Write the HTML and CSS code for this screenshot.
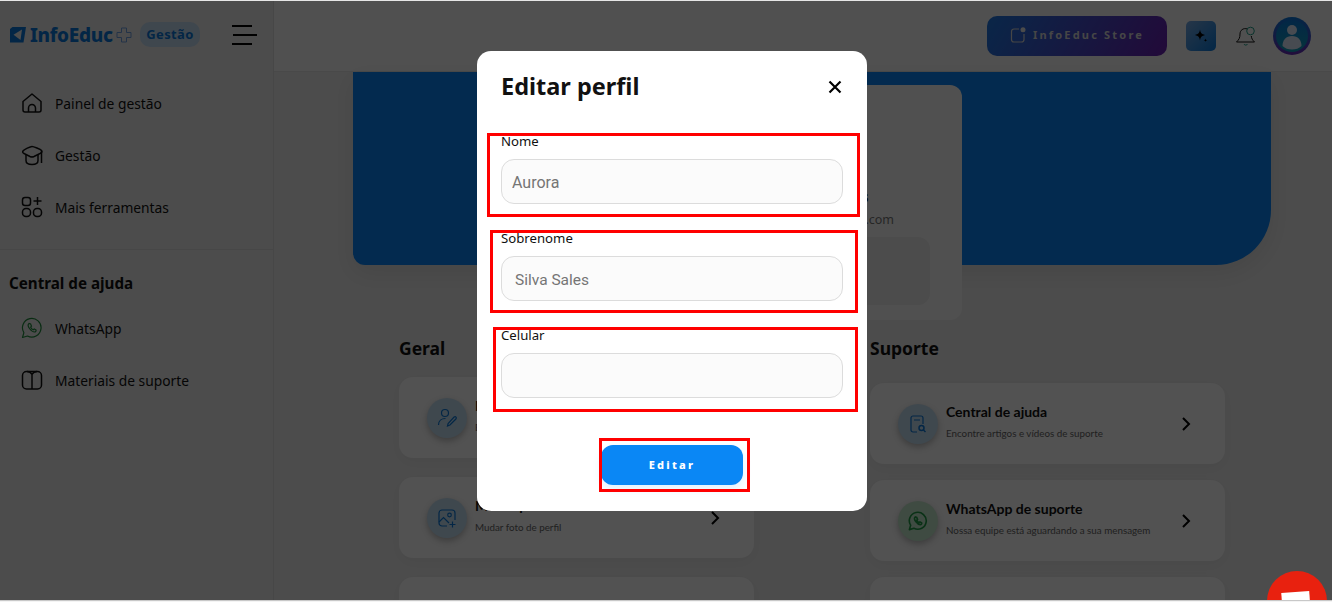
FILE: index.html
```html
<!DOCTYPE html>
<html>

<head>
  <meta charset="UTF-8">
  <title>InfoEduc Gestão</title>
  <link rel="stylesheet" href="styles.css">
</head>

<body>
  <div class="app">
    <aside class="sidebar">
      <div class="brand">
        <svg class="brand-mark" viewBox="0 0 16 16" width="16" height="16">
          <path d="M0 0h16l-2.500 15.500H0z" fill="#0a78d8" />
          <path d="M3.500 7.800l8.500-5.300-1.500 10.500z" fill="#ebebeb" />
          <path d="M0 0h2.500l-2.500 2z" fill="#ebebeb" />
        </svg>
        <span class="brand-name">InfoEduc</span>
        <svg class="brand-plus" viewBox="0 0 16 16" width="16" height="16" fill="none" stroke="#6f9fe0" stroke-width="1">
          <path d="M5.500 1h5v4.500h4.500v5h-4.500v4.500h-5v-4.500h-4.500v-5h4.500z" />
        </svg>
        <span class="brand-badge">Gestão</span>
        <div class="burger"><i></i><i class="long"></i><i></i></div>
      </div>

      <nav class="menu">
        <a class="menu-item">
          <svg viewBox="0 0 22 22" width="22" height="22" fill="none" stroke="#111" stroke-width="1.500">
            <path d="M2 9.500L11 2l9 7.500V18a2 2 0 0 1-2 2H4a2 2 0 0 1-2-2z" stroke-linejoin="round" />
            <path d="M7.500 20v-4a3.500 3.500 0 0 1 7 0v4" />
          </svg>
          Painel de gestão
        </a>
        <a class="menu-item">
          <svg viewBox="0 0 22 22" width="22" height="22" fill="none" stroke="#111" stroke-width="1.500">
            <path d="M11 2.500c-1.500 0-8 3-9 4.500-.8 1.200 0 2 1 2.500l6 3c1.500.7 2.500.7 4 0l6-3c1.500-.8 2.500-1.500 1.500-3-1-1.300-8-4-9.500-4z" stroke-linejoin="round" />
            <path d="M5 11v5.500c0 3 3 4 6 4s6-1 6-4V11M20.500 7v12" />
          </svg>
          Gestão
        </a>
        <a class="menu-item">
          <svg viewBox="0 0 22 22" width="22" height="22" fill="none" stroke="#111" stroke-width="1.500">
            <rect x="1.500" y="1.500" width="8" height="8" rx="2.500" />
            <rect x="1.500" y="12.500" width="8" height="8" rx="3.500" />
            <rect x="12.500" y="12.500" width="8" height="8" rx="3.500" />
            <path d="M16.500 1v8M12.500 5h8" />
          </svg>
          Mais ferramentas
        </a>
      </nav>

      <div class="help">
        <h3>Central de ajuda</h3>
        <a class="menu-item">
          <svg viewBox="0 0 22 22" width="22" height="22" fill="none" stroke="#1f8a3c" stroke-width="1.200">
            <path d="M1.500 20.500l1.400-4.800A9.300 9.300 0 1 1 6.500 19z" stroke-linejoin="round" />
            <path d="M8 6.500c-1.500 1-1 3 .5 5s3.500 3.500 5 3.500c1 0 2-1 1.500-2l-1.800-1-1 .8c-1-.5-2-1.600-2.500-2.600l.8-1-.9-2.200z" />
          </svg>
          WhatsApp
        </a>
        <a class="menu-item">
          <svg viewBox="0 0 22 22" width="22" height="22" fill="none" stroke="#111" stroke-width="1.500">
            <rect x="1.500" y="2.500" width="19" height="17.500" rx="4" />
            <path d="M11 5.500c-1-2-3-3-5-3M11 5.500c1-2 3-3 5-3M11 5.500V20" />
          </svg>
          Materiais de suporte
        </a>
      </div>
    </aside>

    <div class="content">
      <header class="topbar">
        <button class="store-btn">
          <svg viewBox="0 0 16 16" width="16" height="16" fill="none" stroke="#d8d8d8" stroke-width="1.200">
            <path d="M9 2H4a2.500 2.500 0 0 0-2.500 2.500v8A2.500 2.500 0 0 0 4 15h7.500a2.500 2.500 0 0 0 2.500-2.500V7" />
            <circle cx="13" cy="2.800" r="2.500" fill="#e8e8e8" stroke="none" />
          </svg>
          InfoEduc Store
        </button>
        <div class="spark">
          <svg viewBox="0 0 16 16" width="16" height="16" fill="#000">
            <path d="M7 1.500c.6 3.500 1.500 4.500 5 5.500-3.500 1-4.400 2-5 5.500-.6-3.500-1.500-4.500-5-5.500 3.500-1 4.400-2 5-5.500z" />
            <path d="M12.500 10.500c.2 1.200.6 1.600 1.800 1.800-1.200.2-1.600.6-1.800 1.800-.2-1.200-.6-1.600-1.800-1.800 1.200-.2 1.600-.6 1.800-1.800z" />
          </svg>
        </div>
        <svg class="bell" viewBox="0 0 22 22" width="22" height="22" fill="none" stroke="#111" stroke-width="1">
          <path d="M12.500 4C8 2.500 5 5.500 5 9c0 4-1 5.500-3.500 8h18c-2-2-3-3.500-3.200-6" />
          <path d="M9 19c.5 1.500 3 1.500 3.500 0" stroke="#1fa08a" />
          <circle cx="15.500" cy="6" r="3.800" stroke="#1fa08a" />
        </svg>
        <div class="avatar">
          <div class="avatar-inner">
            <svg viewBox="0 0 32 32" width="32" height="32" fill="#dbe9fb">
              <circle cx="16" cy="10" r="5" />
              <path d="M6.500 26c0-6 3.500-10 9.500-10s9.500 4 9.500 10c-2.500 2.500-5.500 3.500-9.500 3.500s-7-1-9.500-3.500z" />
            </svg>
          </div>
        </div>
      </header>

      <main class="page">
        <section class="hero">
          <div class="profile-card">
            <strong>Aurora Silva Sales</strong>
            <span>aurorasilvasales1@gmail.com</span>
            <div class="profile-box"></div>
          </div>
        </section>

        <section class="columns">
          <div class="column column-left">
            <h2>Geral</h2>
            <div class="card-list">
              <a class="card">
                <span class="card-icon">
                  <svg viewBox="0 0 20 20" width="20" height="20" fill="none" stroke="#0a78d8" stroke-width="1.200">
                    <circle cx="8" cy="5" r="3.500" />
                    <path d="M1.500 17c0-4 3-6.500 7-6.500M10.500 18l.6-2.500 6-6.500c1.600-1 2.800.5 1.800 2l-6 6z" />
                  </svg>
                </span>
                <span class="card-text"><b>Editar perfil</b><small>Editar informações do perfil</small></span>
                <svg class="chevron" viewBox="0 0 12 16" width="12" height="16" fill="none" stroke="#000" stroke-width="2"><path d="M3 2l6 6-6 6" /></svg>
              </a>
              <a class="card">
                <span class="card-icon">
                  <svg viewBox="0 0 20 20" width="20" height="20" fill="none" stroke="#0a78d8" stroke-width="1.200">
                    <path d="M10 18H5a3 3 0 0 1-3-3V5a3 3 0 0 1 3-3h10a3 3 0 0 1 3 3v7" />
                    <circle cx="12.500" cy="7" r="1.800" />
                    <path d="M2 14l4.500-4.500L12 15M15.500 13.500v6M12.500 16.500h6" />
                  </svg>
                </span>
                <span class="card-text"><b>Mudar perfil</b><small>Mudar foto de perfil</small></span>
                <svg class="chevron" viewBox="0 0 12 16" width="12" height="16" fill="none" stroke="#000" stroke-width="2"><path d="M3 2l6 6-6 6" /></svg>
              </a>
              <a class="card"></a>
            </div>
          </div>

          <div class="column column-right">
            <h2>Suporte</h2>
            <div class="card-list">
              <a class="card">
                <span class="card-icon">
                  <svg viewBox="0 0 20 20" width="20" height="20" fill="none" stroke="#0a78d8" stroke-width="1.200">
                    <path d="M9 18H5a2 2 0 0 1-2-2V4a2 2 0 0 1 2-2h8a2 2 0 0 1 2 2v6M6 6h6" />
                    <circle cx="13.500" cy="14" r="2.500" stroke-width="1.500" />
                    <path d="M15.500 16l2 2" stroke-width="1.500" />
                  </svg>
                </span>
                <span class="card-text"><b>Central de ajuda</b><small>Encontre artigos e vídeos de suporte</small></span>
                <svg class="chevron" viewBox="0 0 12 16" width="12" height="16" fill="none" stroke="#000" stroke-width="2"><path d="M3 2l6 6-6 6" /></svg>
              </a>
              <a class="card">
                <span class="card-icon card-icon-green">
                  <svg viewBox="0 0 22 22" width="20" height="20" fill="none" stroke="#1f9a45" stroke-width="1.800">
                    <path d="M1.500 20.500l1.400-4.800A9.300 9.300 0 1 1 6.500 19z" stroke-linejoin="round" />
                    <path d="M8 6.500c-1.500 1-1 3 .5 5s3.500 3.500 5 3.500c1 0 2-1 1.500-2l-1.800-1-1 .8c-1-.5-2-1.600-2.500-2.600l.8-1-.9-2.200z" />
                  </svg>
                </span>
                <span class="card-text"><b>WhatsApp de suporte</b><small>Nossa equipe está aguardando a sua mensagem</small></span>
                <svg class="chevron" viewBox="0 0 12 16" width="12" height="16" fill="none" stroke="#000" stroke-width="2"><path d="M3 2l6 6-6 6" /></svg>
              </a>
              <a class="card"></a>
            </div>
          </div>
        </section>
      </main>
    </div>
  </div>

  <div class="overlay">
    <div class="modal">
      <div class="modal-head">
        <h1>Editar perfil</h1>
        <svg viewBox="0 0 14 14" width="14" height="14" fill="none" stroke="#000" stroke-width="2.200"><path d="M1.500 1.500l11 11M12.500 1.500l-11 11" /></svg>
      </div>
      <div class="field">
        <label>Nome</label>
        <input class="input input-nome" type="text" value="Aurora">
      </div>
      <div class="field">
        <label>Sobrenome</label>
        <input class="input input-wide" type="text" value="Silva Sales">
      </div>
      <div class="field">
        <label>Celular</label>
        <input class="input" type="text">
      </div>
      <div class="modal-foot">
        <button class="save-btn">Editar</button>
      </div>

      <!-- marcacoes vermelhas por cima do modal -->
      <div class="mark mark-nome"></div>
      <div class="mark mark-sobrenome"></div>
      <div class="mark mark-celular"></div>
      <div class="mark mark-botao"></div>
    </div>
  </div>

  <div class="chat-bubble"><span></span></div>
  <div class="edge-top"></div>
  <div class="edge-bottom"></div>
</body>

</html>
```

FILE: styles.css
```css
* {
  box-sizing: border-box;
}

html,
body {
  margin: 0;
  height: 100%;
  overflow: hidden;
}

body {
  font-family: "Noto Sans", "Open Sans", sans-serif;
  color: #111;
  background-color: #ececec;
}

.app {
  display: flex;
  height: 602px;
  overflow: hidden;
}

/* Barra lateral */
.sidebar {
  width: 274px;
  flex-shrink: 0;
  border-right: 1px solid #dedede;
}

.brand {
  display: flex;
  align-items: center;
  height: 71px;
  padding: 0 0 2px 10px;
}

.brand-name {
  margin-left: 4px;
  padding-top: 1px;
  width: 82px;
  font-size: 19px;
  font-weight: 800;
  letter-spacing: -0.3px;
  white-space: nowrap;
  color: #0a78d8;
}

.brand-plus {
  margin-left: 4px;
}

.brand-badge {
  margin-left: 8px;
  width: 60px;
  height: 25px;
  line-height: 25px;
  text-align: center;
  border-radius: 10px;
  font-size: 13px;
  font-weight: 700;
  letter-spacing: 0.4px;
  color: #0a78d8;
  background-color: #c4dcf2;
}

.burger {
  margin-left: 32px;
  display: flex;
  flex-direction: column;
  gap: 7px;
  width: 25px;
}

.burger i {
  display: block;
  width: 20px;
  height: 2px;
  background-color: #000;
}

.burger .long {
  width: 24px;
  margin-left: 1px;
}

.menu {
  padding-top: 6px;
  height: 179px;
  border-bottom: 1px solid #dedede;
}

.menu-item {
  display: flex;
  align-items: center;
  gap: 12px;
  height: 52px;
  padding-left: 21px;
  font-size: 13.800px;
}

.help h3 {
  margin: 22px 0 8px;
  padding-left: 9px;
  font-size: 15.200px;
  line-height: 22px;
  font-weight: 700;
}

/* Cabecalho */
.content {
  flex: 1;
  min-width: 0;
}

.topbar {
  display: flex;
  align-items: center;
  height: 72px;
  padding: 0 0 0 713px;
  background-color: #f8f8f8;
  border-bottom: 1px solid #e4e4e4;
}

.store-btn {
  display: flex;
  align-items: center;
  justify-content: center;
  gap: 7px;
  width: 180px;
  height: 40px;
  padding: 0 0 2px;
  border: 0;
  border-radius: 10px;
  font-family: "Noto Sans", sans-serif;
  font-size: 11px;
  font-weight: 700;
  letter-spacing: 2.200px;
  color: #d8d8d8;
  background: linear-gradient(120deg, #1f78e0, #6a1fb0);
}

.spark {
  display: flex;
  align-items: center;
  justify-content: center;
  margin-left: 19px;
  width: 30px;
  height: 30px;
  border-radius: 5px;
  background: linear-gradient(135deg, #77a8e0, #0a78d8);
}

.bell {
  margin-left: 19px;
}

.avatar {
  display: flex;
  align-items: center;
  justify-content: center;
  margin-left: 16px;
  width: 38px;
  height: 38px;
  border-radius: 50%;
  background: linear-gradient(180deg, #0a78d8, #6a2bb8);
}

.avatar-inner {
  width: 32px;
  height: 32px;
  border-radius: 50%;
  overflow: hidden;
  background: linear-gradient(180deg, #0a78d8, #12a0b8);
}

/* Conteudo */
.page {
  padding-left: 79px;
}

.hero {
  display: flex;
  justify-content: flex-end;
  width: 918px;
  height: 193px;
  padding: 13px 309px 0 0;
  background-color: #0a84f5;
  border-radius: 0 0 55px 12px;
  box-shadow: 0 8px 24px rgba(0, 0, 0, 0.08);
}

.profile-card {
  display: flex;
  flex-direction: column;
  align-items: center;
  width: 310px;
  height: 235px;
  padding: 103px 32px 0;
  border-radius: 12px;
  background-color: #f9f9f9;
}

.profile-card strong {
  font-size: 14px;
  line-height: 18px;
  white-space: nowrap;
}

.profile-card span {
  margin-top: 5px;
  font-size: 12.500px;
  line-height: 18px;
  white-space: nowrap;
  color: #777;
}

.profile-box {
  flex-shrink: 0;
  width: 100%;
  height: 68px;
  margin-top: 8px;
  border-radius: 12px;
  background-color: #ececec;
}

.columns {
  display: flex;
  gap: 116px;
  padding-left: 46px;
}

.column {
  width: 355px;
}

.column h2 {
  margin: 71px 0 0;
  font-size: 17.500px;
  line-height: 24px;
  font-weight: 700;
}

.column-left h2 {
  margin-bottom: 17px;
}

.column-left .card-list {
  gap: 19px;
}

.column-right h2 {
  margin-bottom: 23px;
}

.column-right .card-list {
  gap: 16px;
}

.card-list {
  display: flex;
  flex-direction: column;
}

.card {
  display: flex;
  align-items: center;
  height: 81px;
  padding: 0 33px 0 28px;
  border-radius: 14px;
  background-color: #fdfdfd;
  box-shadow: 0 4px 14px rgba(0, 0, 0, 0.04);
  flex-shrink: 0;
}

.card-icon {
  display: flex;
  align-items: center;
  justify-content: center;
  width: 40px;
  height: 40px;
  border-radius: 50%;
  background-color: #c5dff2;
  box-shadow: 0 3px 6px rgba(0, 0, 0, 0.25);
  flex-shrink: 0;
}

.card-icon-green {
  background-color: #c5e8cd;
}

.card-text {
  flex: 1;
  display: flex;
  flex-direction: column;
  gap: 7px;
  margin-left: 8px;
  margin-top: -5px;
  font-family: "Lato", sans-serif;
}

.card-text b {
  font-size: 14px;
  line-height: 16px;
  font-weight: 700;
}

.card-text small {
  font-size: 9.800px;
  line-height: 12px;
  color: #666;
}

/* Modal */
.overlay {
  position: fixed;
  inset: 0;
  display: flex;
  justify-content: center;
  align-items: flex-start;
  padding: 51px 0 0 12px;
  background-color: rgba(0, 0, 0, 0.68);
}

.modal {
  position: relative;
  width: 390px;
  height: 460px;
  padding: 0 24px;
  border-radius: 14px;
  background-color: #fff;
}

.modal-head {
  display: flex;
  align-items: center;
  justify-content: space-between;
  height: 70px;
}

.modal-head svg {
  margin: 2px 1px 0 0;
}

.modal-head h1 {
  margin: 0;
  font-size: 23.500px;
  font-weight: 700;
  color: #111;
}

.field {
  height: 97px;
}

.field label {
  display: block;
  height: 38px;
  padding-top: 11px;
  font-size: 13.200px;
  line-height: 18px;
  color: #111;
}

.input {
  display: block;
  width: 342px;
  height: 45px;
  padding: 2px 10px 0;
  border: 1px solid #dcdcdc;
  border-radius: 13px;
  outline: 0;
  font-family: "Roboto", sans-serif;
  font-size: 15.500px;
  color: #757575;
  background-color: #fbfbfb;
}

.input-nome {
  font-size: 16px;
}

.input-wide {
  padding-left: 13px;
}

.modal-foot {
  display: flex;
  justify-content: center;
  padding-top: 33px;
}

.save-btn {
  width: 142px;
  height: 40px;
  padding: 0 0 2px;
  border: 0;
  border-radius: 12px;
  font-family: "Noto Sans", sans-serif;
  font-size: 11px;
  font-weight: 800;
  letter-spacing: 2.200px;
  color: #fff;
  background-color: #0a87f5;
  box-shadow: 0 4px 8px rgba(10, 135, 245, 0.12);
}

.mark {
  position: absolute;
  border: 3px solid #f00;
}

.mark-nome {
  left: 10px;
  top: 82px;
  width: 373px;
  height: 84px;
}

.mark-sobrenome {
  left: 13px;
  top: 179px;
  width: 368px;
  height: 83px;
}

.mark-celular {
  left: 16px;
  top: 276px;
  width: 365px;
  height: 85px;
}

.mark-botao {
  left: 122px;
  top: 387px;
  width: 151px;
  height: 54px;
}

/* Widget e bordas da captura */
.chat-bubble {
  position: fixed;
  left: 1267px;
  top: 571px;
  width: 60px;
  height: 60px;
  border-radius: 50%;
  background-color: #e8210f;
}

.chat-bubble span {
  position: absolute;
  left: 15px;
  top: 21px;
  width: 28px;
  height: 22px;
  background-color: #fff;
  transform: rotate(-4deg);
}

.edge-top {
  position: fixed;
  left: 0;
  right: 0;
  top: 0;
  height: 1px;
  background-color: #e6e6e6;
}

.edge-bottom {
  position: fixed;
  left: 0;
  right: 0;
  bottom: 0;
  height: 2px;
  background-color: #f4f4f4;
  border-top: 1px solid #c8c8c8;
}
```
